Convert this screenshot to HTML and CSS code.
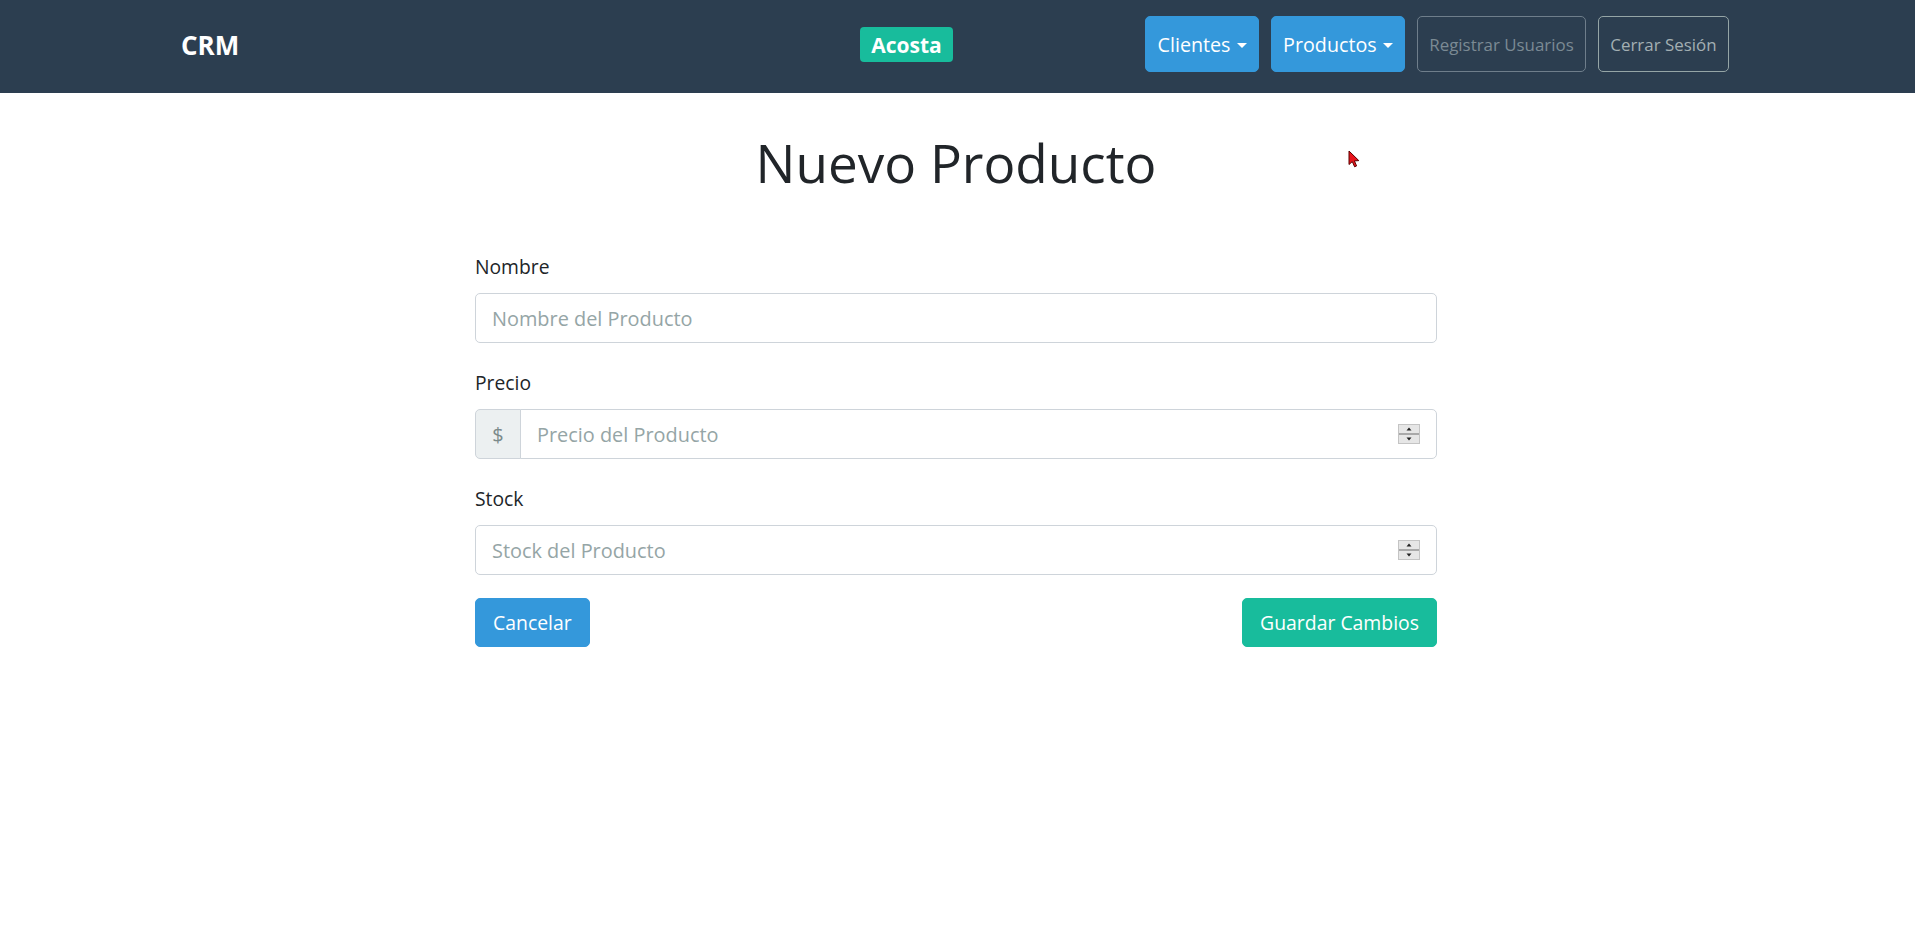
FILE: index.html
```html
<!DOCTYPE html>
<html lang="es">
<head>
<meta charset="utf-8">
<title>CRM - Nuevo Producto</title>
<link rel="stylesheet" href="styles.css">
</head>
<body>
<nav class="navbar">
  <a class="brand" href="#">CRM</a>
  <span class="badge">Acosta</span>
  <div class="nav-actions">
    <button class="btn btn-info">Clientes<span class="caret"></span></button>
    <button class="btn btn-info">Productos<span class="caret"></span></button>
    <button class="btn btn-outline btn-muted">Registrar Usuarios</button>
    <button class="btn btn-outline">Cerrar Sesión</button>
  </div>
</nav>

<main class="page">
  <h1 class="title">Nuevo Producto</h1>
  <form class="form">
    <div class="form-group">
      <label class="label">Nombre</label>
      <input class="form-control" type="text" placeholder="Nombre del Producto">
    </div>
    <div class="form-group">
      <label class="label">Precio</label>
      <div class="input-group">
        <span class="prepend">$</span>
        <div class="num-wrap">
          <input class="form-control grouped" type="text" placeholder="Precio del Producto">
          <span class="spinner"><svg width="22" height="20" viewBox="0 0 22 20"><rect x="0.5" y="0.5" width="21" height="19" fill="#e6e6e6" stroke="#c4c4c4"/><rect x="1" y="9" width="20" height="2" fill="#a9a9a9"/><path d="M8.5 6.5 L13.5 6.5 L11 3.5 Z" fill="#222"/><path d="M8.5 13.5 L13.5 13.5 L11 16.5 Z" fill="#222"/></svg></span>
        </div>
      </div>
    </div>
    <div class="form-group">
      <label class="label">Stock</label>
      <div class="num-wrap">
        <input class="form-control" type="text" placeholder="Stock del Producto">
        <span class="spinner"><svg width="22" height="20" viewBox="0 0 22 20"><rect x="0.5" y="0.5" width="21" height="19" fill="#e6e6e6" stroke="#c4c4c4"/><rect x="1" y="9" width="20" height="2" fill="#a9a9a9"/><path d="M8.5 6.5 L13.5 6.5 L11 3.5 Z" fill="#222"/><path d="M8.5 13.5 L13.5 13.5 L11 16.5 Z" fill="#222"/></svg></span>
      </div>
    </div>
    <div class="actions">
      <button type="button" class="btn-form btn-blue">Cancelar</button>
      <button type="button" class="btn-form btn-green">Guardar Cambios</button>
    </div>
  </form>
</main>

<svg class="cursor" width="12" height="18" viewBox="0 0 12 18"><path d="M1 1 L1 14.5 L4.3 11.6 L6.6 16.8 L8.6 15.9 L6.4 10.9 L10.8 10.6 Z" fill="#e8141b" stroke="#5a0000" stroke-width="1" stroke-linejoin="round"/></svg>
</body>
</html>
```

FILE: styles.css
```css
* { box-sizing: border-box; }

html, body {
  margin: 0;
  padding: 0;
  background: #fff;
}

body {
  font-family: "Open Sans", "Noto Sans", "Liberation Sans", sans-serif;
  font-size: 19.3px;
  color: #212529;
  position: relative;
  min-height: 948px;
}

.navbar {
  height: 93px;
  background: #2c3e50;
  display: flex;
  align-items: center;
  padding: 0 186px 5px 181px;
}

.brand {
  color: #fff;
  font-weight: 700;
  font-size: 26px;
  text-decoration: none;
  line-height: 1;
  margin-top: 1px;
}

.badge {
  margin-left: 621px;
  background: #18bc9c;
  color: #fff;
  font-weight: 700;
  font-size: 21px;
  height: 35px;
  padding: 0 11px;
  border-radius: 4px;
  display: inline-flex;
  align-items: center;
  margin-top: 1px;
}

.nav-actions {
  margin-left: auto;
  display: flex;
  gap: 11.6px;
  align-items: center;
}

.btn {
  font-family: inherit;
  height: 56px;
  padding: 0 11.5px;
  border-radius: 5px;
  border: 1px solid transparent;
  display: inline-flex;
  align-items: center;
  cursor: pointer;
}

.btn-info {
  background: #3498db;
  border-color: #3498db;
  color: #fff;
  font-size: 19.7px;
}

.caret {
  display: inline-block;
  width: 0;
  height: 0;
  margin-left: 6px;
  border-top: 5.8px solid #fff;
  border-left: 5.8px solid transparent;
  border-right: 5.8px solid transparent;
  margin-top: 2px;
}

.btn-outline {
  background: transparent;
  border-color: #95a5a6;
  color: #a3afb3;
  font-size: 16.9px;
}

.btn-muted {
  border-color: #6f7e8b;
  color: #7b8a94;
}

.page {
  width: 965px;
  margin: 0 auto;
  padding-right: 3px;
}

.title {
  margin: 38px 0 0;
  font-size: 53px;
  font-weight: 400;
  line-height: 63px;
  text-align: center;
  color: #212529;
}

.form {
  margin-top: 58px;
}

.form-group {
  margin-bottom: 25px;
}

.label {
  display: block;
  line-height: 29px;
  margin-bottom: 12px;
}

.form-control {
  display: block;
  width: 100%;
  height: 50px;
  padding: 0 16px;
  font-family: inherit;
  font-size: 19.9px;
  color: #2c3e50;
  background: #fff;
  border: 1px solid #ced4da;
  border-radius: 5px;
  outline: none;
}

.form-control::placeholder {
  color: #95a5a6;
  opacity: 1;
}

.input-group {
  display: flex;
}

.prepend {
  width: 46px;
  height: 50px;
  flex: none;
  display: flex;
  align-items: center;
  justify-content: center;
  background: #ecf0f1;
  color: #7b8a8b;
  font-size: 19.9px;
  border: 1px solid #ced4da;
  border-radius: 5px 0 0 5px;
}

.num-wrap {
  position: relative;
  flex: 1;
}

.grouped {
  margin-left: -1px;
  width: calc(100% + 1px);
  border-radius: 0 5px 5px 0;
}

.spinner {
  position: absolute;
  right: 17px;
  top: 15px;
  width: 22px;
  height: 20px;
  display: block;
  line-height: 0;
}

.actions {
  display: flex;
  justify-content: space-between;
  margin-top: -2px;
}

.btn-form {
  font-family: inherit;
  font-size: 19.4px;
  height: 49px;
  padding: 0 17px;
  border-radius: 5px;
  border: 1px solid transparent;
  color: #fff;
  cursor: pointer;
}

.btn-blue {
  background: #3498db;
  border-color: #3498db;
}

.btn-green {
  background: #18bc9c;
  border-color: #18bc9c;
}

.cursor {
  position: absolute;
  left: 1348px;
  top: 150px;
}
```
